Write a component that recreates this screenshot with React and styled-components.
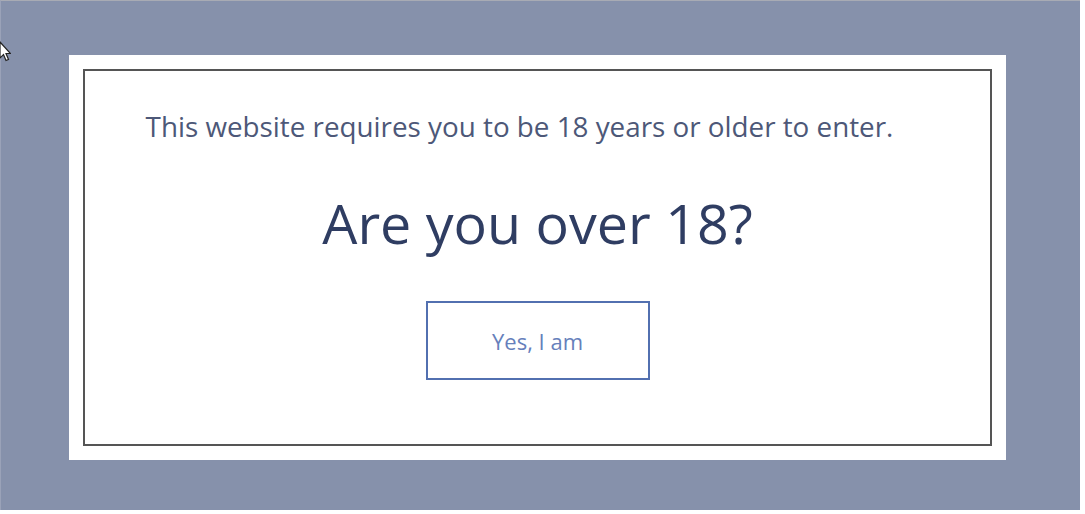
import React from 'react';
import styled, { createGlobalStyle } from 'styled-components';

const GlobalStyle = createGlobalStyle`
  html, body {
    margin: 0;
    padding: 0;
    background: #ffffff;
  }
  body {
    font-family: "Open Sans", "Noto Sans", sans-serif;
  }
`;

const Overlay = styled.div`
  position: relative;
  box-sizing: border-box;
  width: 1080px;
  height: 510px;
  background: #8691ab;
  border-top: 1px solid #a8abb4;
  border-left: 1px solid #9aa2b8;
  padding: 54px 0 0 68px;
`;

const Modal = styled.div`
  box-sizing: border-box;
  width: 937px;
  height: 405px;
  background: #ffffff;
  padding: 14px;
`;

const Frame = styled.div`
  box-sizing: border-box;
  height: 100%;
  border: 2px solid #555555;
  display: flex;
  flex-direction: column;
  align-items: center;
`;

const Notice = styled.p`
  margin: 39px 0 0;
  font-size: 27.8px;
  line-height: 1.2;
  color: #4d5878;
  transform: translateX(-18px);
`;

const Question = styled.h1`
  margin: 47px 0 0;
  font-size: 55.6px;
  font-weight: 400;
  color: #2f3d62;
  line-height: 1.2;
`;

const YesButton = styled.button`
  box-sizing: border-box;
  margin-top: 44px;
  width: 224px;
  height: 79px;
  background: #ffffff;
  border: 2px solid #5270b0;
  color: #6680bb;
  font-family: "Open Sans", "Noto Sans", sans-serif;
  font-size: 22px;
  cursor: pointer;
`;

const Cursor = styled.svg`
  position: absolute;
  left: -2px;
  top: 40px;
`;

export default function App() {
  return (
    <>
      <GlobalStyle />
      <Overlay>
        <Cursor width="12" height="22" viewBox="0 0 12 22">
          <path d="M1 1 L1 17 L4.5 13.5 L7 19.5 L9.5 18.5 L7 12.5 L11.5 12.5 Z" fill="#ffffff" stroke="#222" strokeWidth="1.2" />
        </Cursor>
        <Modal>
          <Frame>
            <Notice>This website requires you to be 18 years or older to enter.</Notice>
            <Question>Are you over 18?</Question>
            <YesButton>Yes, I am</YesButton>
          </Frame>
        </Modal>
      </Overlay>
    </>
  );
}
